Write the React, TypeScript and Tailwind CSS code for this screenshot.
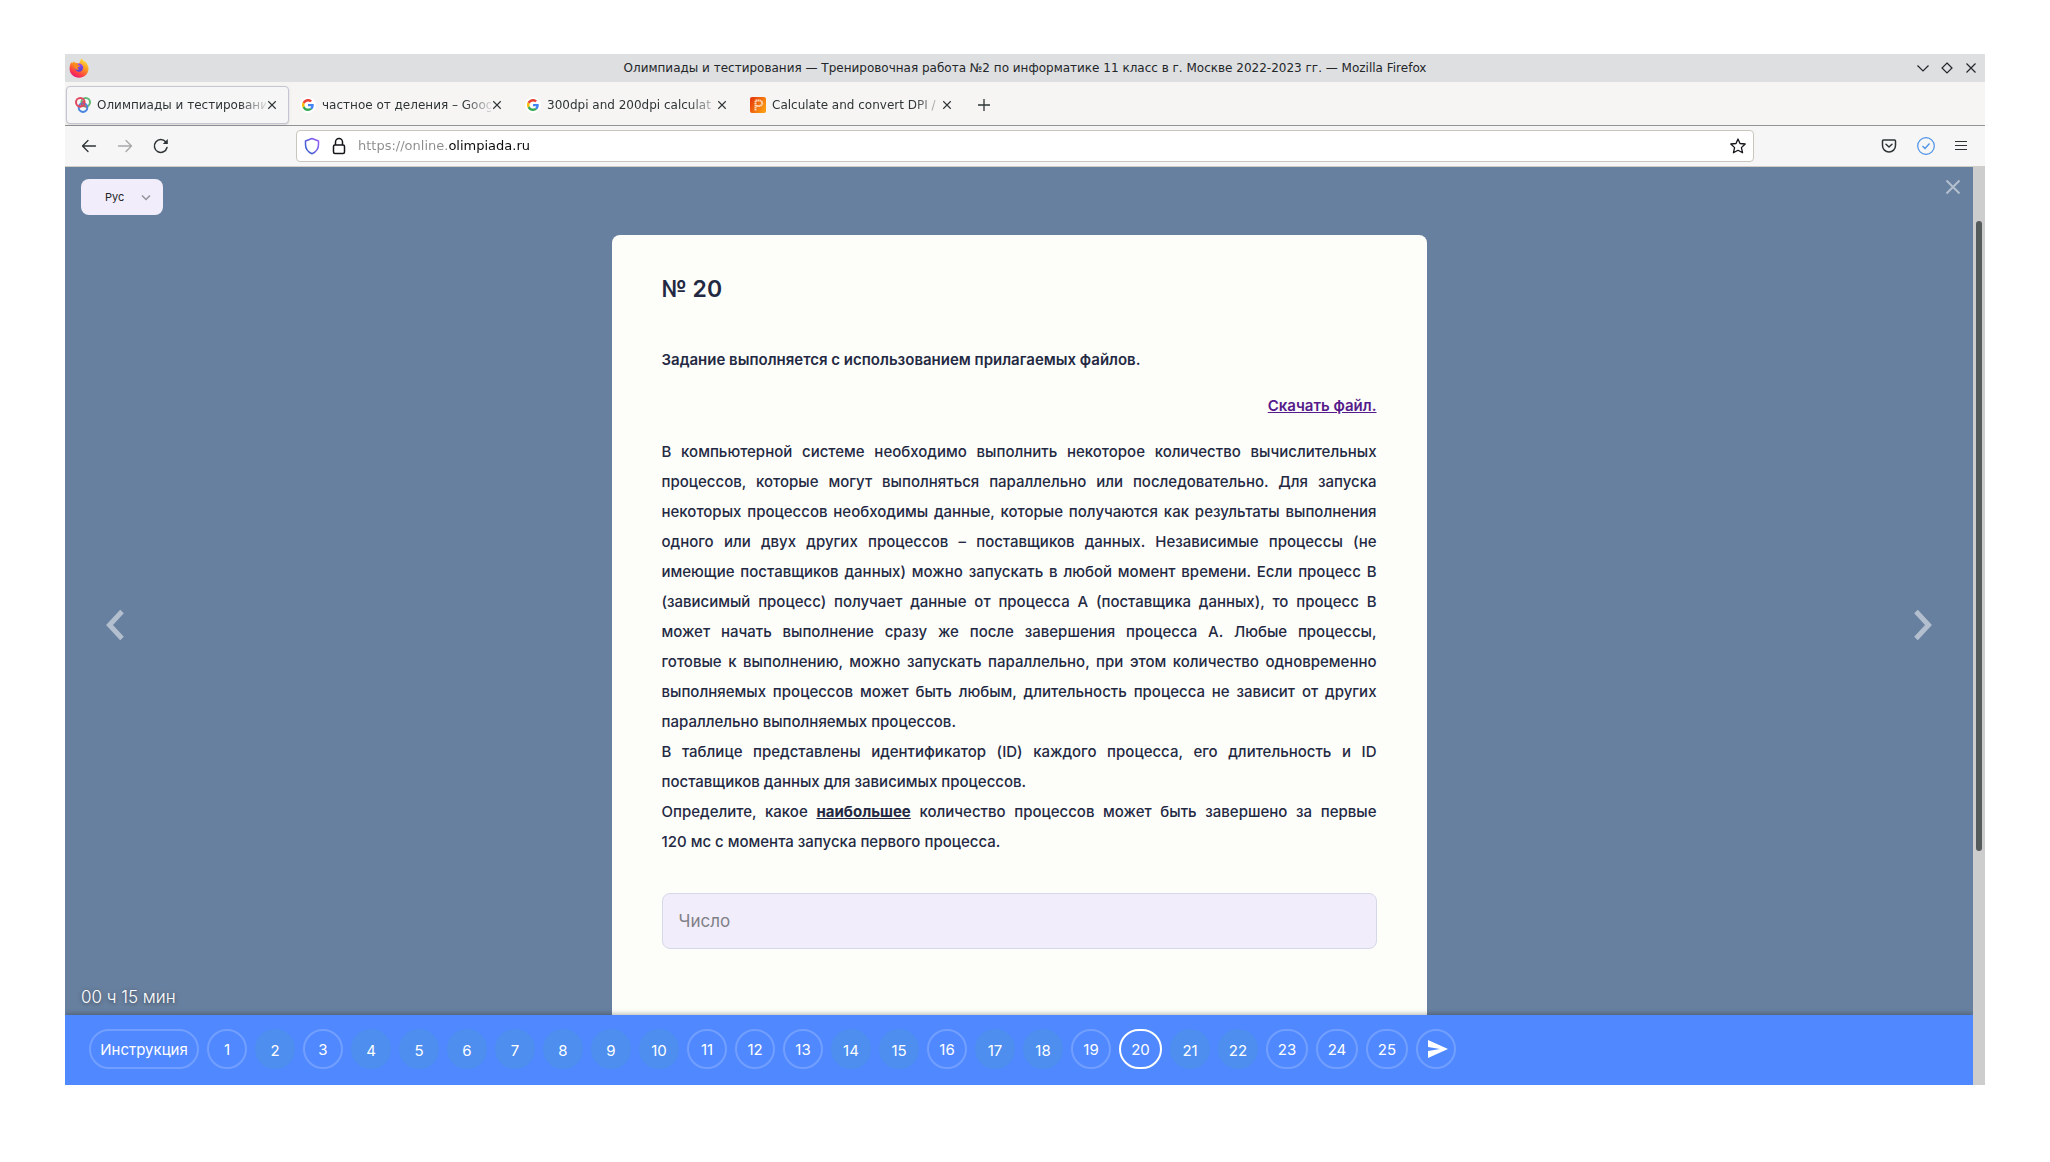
import React from "react";

type IconProps = { className?: string };

const Firefox = () => (
  <svg viewBox="0 0 20 20" className="h-5 w-5" aria-hidden="true">
    <defs>
      <linearGradient id="fx-fire" x1="0.8" y1="0" x2="0.25" y2="1">
        <stop offset="0" stopColor="#ffe84a" />
        <stop offset="0.4" stopColor="#ff9a1f" />
        <stop offset="0.75" stopColor="#ff3f45" />
        <stop offset="1" stopColor="#e5127d" />
      </linearGradient>
      <linearGradient id="fx-globe" x1="0.3" y1="0" x2="0.6" y2="1">
        <stop offset="0" stopColor="#a64ff0" />
        <stop offset="1" stopColor="#5a3fd0" />
      </linearGradient>
    </defs>
    <path d="M12.4.4c1.8 1.200 2.200 2.300 2.600 3.200.8-.1.900-.6.900-.6 2.400 2.500 3.700 5.200 3.600 8-.2 5-4.300 8.700-9.400 8.700C4.700 19.700.6 15.600.6 10.400c0-2.600.7-4.700 1.900-6.400l.5 1.200L5 3.200l.9 1.700c1.600-.2 3 .1 4 .7 1-1.400 1.200-3.500 2.500-5.200z" fill="url(#fx-fire)" />
    <circle cx="10" cy="9.600" r="4.200" fill="url(#fx-globe)" />
    <path d="M3.600 5.500c2.300-.7 4.600-.3 5.700 1.700.5.300 1.500.2 2 .4-.4 1.100-2.200 1.200-2.600 2.200-.1.800.4 1.500 1.500 1.900-1.700.5-3.600-.2-4.500-1.600z" fill="#ff8a1c" />
  </svg>
);

const Rings = () => (
  <svg viewBox="0 0 16 16" className="h-4 w-4" fill="none" strokeWidth="2" aria-hidden="true">
    <circle cx="10.700" cy="5.300" r="4.300" stroke="#5fb878" />
    <circle cx="8" cy="10.600" r="4.300" stroke="#4a86e0" />
    <circle cx="5.300" cy="5.300" r="4.300" stroke="#e0475f" />
    <path d="M5 10.800 8 3.800l3 7M6 8.800h4" stroke="#d8455f" strokeWidth="1" />
  </svg>
);

const Google = () => (
  <span className="flex h-4 w-4 items-center justify-center rounded-full bg-white">
    <svg viewBox="0 0 48 48" className="h-3 w-3" aria-hidden="true">
      <path fill="#EA4335" d="M24 9.500c3.540 0 6.710 1.220 9.210 3.600l6.850-6.850C35.900 2.380 30.470 0 24 0 14.620 0 6.510 5.380 2.560 13.220l7.980 6.190C12.430 13.720 17.740 9.500 24 9.500z" />
      <path fill="#4285F4" d="M46.980 24.550c0-1.570-.15-3.090-.38-4.550H24v9.020h12.940c-.58 2.960-2.260 5.480-4.780 7.180l7.730 6c4.510-4.180 7.090-10.360 7.090-17.650z" />
      <path fill="#FBBC05" d="M10.530 28.590c-.48-1.450-.76-2.990-.76-4.590s.27-3.140.76-4.590l-7.980-6.190C.92 16.460 0 20.120 0 24c0 3.880.92 7.540 2.560 10.780l7.970-6.190z" />
      <path fill="#34A853" d="M24 48c6.480 0 11.930-2.130 15.890-5.810l-7.730-6c-2.150 1.450-4.920 2.300-8.160 2.300-6.260 0-11.570-4.220-13.470-9.910l-7.980 6.190C6.510 42.620 14.620 48 24 48z" />
    </svg>
  </span>
);

const PixelP = () => (
  <svg viewBox="0 0 16 16" className="h-4 w-4" aria-hidden="true">
    <defs>
      <linearGradient id="pxl" x1="0" y1="0" x2="1" y2="0.600">
        <stop offset="0" stopColor="#e5310c" />
        <stop offset="1" stopColor="#fb9a10" />
      </linearGradient>
    </defs>
    <rect width="16" height="16" rx="2" fill="url(#pxl)" />
    <path d="M5.500 13.500v-10h4a2.500 2.500 0 0 1 0 5.500H6" fill="none" stroke="#ffd9b8" strokeWidth="2" strokeDasharray="1.600 0.400" />
  </svg>
);

const Cross = ({ className }: IconProps) => (
  <svg viewBox="0 0 16 16" className={className} fill="none" stroke="currentColor" strokeWidth="1.500" aria-hidden="true">
    <path d="m3 3 10 10M13 3 3 13" />
  </svg>
);

const Arrow = () => (
  <svg viewBox="0 0 16 16" className="h-4 w-4" fill="none" stroke="currentColor" strokeWidth="1.300" strokeLinecap="round" strokeLinejoin="round" aria-hidden="true">
    <path d="M14.500 8h-13M7 2.500 1.500 8 7 13.500" />
  </svg>
);

const Reload = () => (
  <svg viewBox="0 0 16 16" className="h-4 w-4" fill="none" stroke="currentColor" strokeWidth="1.500" strokeLinecap="round" aria-hidden="true">
    <path d="M14 9.500A6.400 6.400 0 1 1 12.800 4" />
    <path d="M14.800 1v5h-5z" fill="currentColor" stroke="none" />
  </svg>
);

const Shield = () => (
  <svg viewBox="0 0 16 18" className="h-[18px] w-4" fill="none" strokeWidth="1.500" strokeLinejoin="round" aria-hidden="true">
    <defs>
      <linearGradient id="shield" x1="1" y1="0" x2="0" y2="0.700">
        <stop offset="0" stopColor="#9a5cf5" />
        <stop offset="1" stopColor="#3a5fd0" />
      </linearGradient>
    </defs>
    <path d="M8 1.500 14.500 4v3.500c0 4-2.500 7.500-6.500 9.200-4-1.700-6.500-5.200-6.500-9.200V4z" stroke="url(#shield)" />
  </svg>
);

const Lock = () => (
  <svg viewBox="0 0 14 18" className="h-[18px] w-3.5" fill="none" stroke="#15141a" strokeWidth="1.500" aria-hidden="true">
    <rect x="1.500" y="8" width="11" height="8.500" rx="1.500" />
    <path d="M3.500 8V5a3.500 3.500 0 0 1 7 0v3" />
  </svg>
);

const Star = () => (
  <svg viewBox="0 0 16 16" className="h-4 w-4" fill="none" stroke="#15141a" strokeWidth="1.300" strokeLinejoin="round" aria-hidden="true">
    <path d="M8 1l2 4.500 5.200.5-3.800 3.600 1.200 5.200L8 12.300l-4.600 2.500 1.200-5.200L.8 6 6 5.500z" />
  </svg>
);

const Pocket = () => (
  <svg viewBox="0 0 16 16" className="h-4 w-4" fill="none" stroke="#2e3436" strokeWidth="1.500" strokeLinecap="round" strokeLinejoin="round" aria-hidden="true">
    <path d="M2.500 2h11a1 1 0 0 1 1 1v4.500a6.500 6.500 0 0 1-13 0V3a1 1 0 0 1 1-1z" />
    <path d="M5 6.200 8 9l3-2.800" />
  </svg>
);

const CheckCircle = () => (
  <svg viewBox="0 0 18 18" className="h-[18px] w-[18px]" fill="none" stroke="#4a90e8" aria-hidden="true">
    <circle cx="9" cy="9" r="8.300" strokeWidth="1.200" />
    <path d="m5.500 9 2.500 2.500 4.500-5" strokeWidth="1.300" />
  </svg>
);

const Menu = () => (
  <svg viewBox="0 0 12 12" className="h-3 w-3" fill="none" stroke="#2e3436" aria-hidden="true">
    <path d="M0 1.500h12M0 5.500h12M0 9.500h12" />
  </svg>
);

const Chevron = ({ className }: IconProps) => (
  <svg viewBox="0 0 20 32" className={className} fill="none" stroke="currentColor" strokeWidth="5" strokeLinejoin="miter" aria-hidden="true">
    <path d="M17 2.500 4.500 16 17 29.500" />
  </svg>
);

const Send = () => (
  <svg viewBox="0 0 20 18" className="h-[18px] w-5" fill="#fff" aria-hidden="true">
    <path d="M0 0l20 9L0 18v-7l12-2L0 7z" />
  </svg>
);

const tabs = [
  { icon: <Rings />, title: "Олимпиады и тестировани", active: true },
  { icon: <Google />, title: "частное от деления – Goog", active: false },
  { icon: <Google />, title: "300dpi and 200dpi calculat", active: false },
  { icon: <PixelP />, title: "Calculate and convert DPI /", active: false },
];

function TitleBar() {
  return (
    <header className="grid h-7 grid-cols-[100px_1fr_100px] items-center bg-[#dedfe1] px-1 text-[#232629]">
      <Firefox />
      <h1 className="truncate text-center text-[12px]">
        Олимпиады и тестирования — Тренировочная работа №2 по информатике 11 класс в г. Москве 2022-2023 гг. — Mozilla Firefox
      </h1>
      <div className="flex items-center justify-end gap-2 pr-0.5">
        <button aria-label="Свернуть" className="flex h-4 w-4 items-center justify-center">
          <svg viewBox="0 0 12 12" className="h-3 w-3" fill="none" stroke="currentColor" strokeWidth="1.200"><path d="m.5 3.500 5.500 5.500 5.500-5.500" /></svg>
        </button>
        <button aria-label="Развернуть" className="flex h-4 w-4 items-center justify-center">
          <svg viewBox="0 0 12 12" className="h-3 w-3" fill="none" stroke="currentColor" strokeWidth="1.200"><path d="M6 1l5 5-5 5-5-5z" /></svg>
        </button>
        <button aria-label="Закрыть окно" className="flex h-4 w-4 items-center justify-center">
          <svg viewBox="0 0 12 12" className="h-3 w-3" fill="none" stroke="currentColor" strokeWidth="1.200"><path d="m1.500 1.500 9 9M10.500 1.500l-9 9" /></svg>
        </button>
      </div>
    </header>
  );
}

function TabStrip() {
  return (
    <div className="flex h-11 items-center border-b border-[#929595] bg-[#f6f5f4] pt-0.5 pl-px">
      {tabs.map((t) => (
        <div
          key={t.title}
          className={
            t.active
              ? "mr-0.5 flex h-[38px] w-[223px] items-center gap-1.5 rounded border border-[#c4c4d2] bg-[#f6f6f6] pr-2.5 pl-2 text-[#2e3436] shadow-sm"
              : "mr-0.5 flex h-[38px] w-[223px] items-center gap-1.5 border border-transparent pr-2.5 pl-2 text-[#2e3436]"
          }
        >
          {t.icon}
          <button className="min-w-0 flex-1 text-left text-[12px] whitespace-nowrap [mask-image:linear-gradient(to_right,#000_84%,rgba(0,0,0,0.15))]">
            {t.title}
          </button>
          <button aria-label="Закрыть вкладку" className="-ml-1.5">
            <Cross className="h-3 w-3" />
          </button>
        </div>
      ))}
      <button aria-label="Новая вкладка" className="ml-3">
        <svg viewBox="0 0 12 12" className="h-3 w-3" stroke="#2e3436" strokeWidth="1.300"><path d="M6 0v12M0 6h12" /></svg>
      </button>
    </div>
  );
}

function Toolbar() {
  return (
    <div className="flex h-[41px] items-center border-b border-[#cfcdc4] bg-[#f6f6f6] pr-[18px] pl-4 text-[#2e3436]">
      <div className="flex w-[215px] items-center gap-5">
        <button aria-label="Назад"><Arrow /></button>
        <button aria-label="Вперёд" className="rotate-180 opacity-40"><Arrow /></button>
        <button aria-label="Обновить"><Reload /></button>
      </div>
      <div className="flex h-8 flex-1 items-center rounded border border-[#c9c7bd] bg-white px-[7px]">
        <Shield />
        <span className="ml-3"><Lock /></span>
        <input
          aria-label="Адрес"
          defaultValue="https://online.olimpiada.ru"
          className="ml-3 min-w-0 flex-1 bg-[linear-gradient(to_right,#8c8c8c_89px,#0c0c0d_89px)] bg-clip-text text-[13px] text-transparent outline-none"
        />
        <button aria-label="Добавить закладку"><Star /></button>
      </div>
      <div className="ml-[127px] flex items-center gap-5">
        <button aria-label="Pocket"><Pocket /></button>
        <button aria-label="Проверка"><CheckCircle /></button>
        <button aria-label="Меню"><Menu /></button>
      </div>
    </div>
  );
}

const Line = ({ children }: { children: React.ReactNode }) => (
  <span className="block [text-align-last:justify]">{children}</span>
);

function Task() {
  return (
    <article className="flex w-full max-w-[815px] flex-col self-stretch rounded-t-lg bg-[#fdfef9] px-[50px] pt-9 pb-16 text-[#242943]">
      <h2 className="text-[23px] leading-[36px] font-semibold">№ 20</h2>
      <p className="mt-[38px] text-[15px] leading-[30px] font-semibold">Задание выполняется с использованием прилагаемых файлов.</p>
      <p className="mt-4 text-right text-[15px] leading-[30px] font-semibold">
        <a href="#file" className="text-[#551a8b] underline">Скачать файл.</a>
      </p>
      <div className="mt-4 text-[15px] leading-[30px] font-medium">
        <p>
          <Line>В компьютерной системе необходимо выполнить некоторое количество вычислительных</Line>
          <Line>процессов, которые могут выполняться параллельно или последовательно. Для запуска</Line>
          <Line>некоторых процессов необходимы данные, которые получаются как результаты выполнения</Line>
          <Line>одного или двух других процессов – поставщиков данных. Независимые процессы (не</Line>
          <Line>имеющие поставщиков данных) можно запускать в любой момент времени. Если процесс B</Line>
          <Line>(зависимый процесс) получает данные от процесса A (поставщика данных), то процесс B</Line>
          <Line>может начать выполнение сразу же после завершения процесса A. Любые процессы,</Line>
          <Line>готовые к выполнению, можно запускать параллельно, при этом количество одновременно</Line>
          <Line>выполняемых процессов может быть любым, длительность процесса не зависит от других</Line>
          параллельно выполняемых процессов.
        </p>
        <p>
          <Line>В таблице представлены идентификатор (ID) каждого процесса, его длительность и ID</Line>
          поставщиков данных для зависимых процессов.
        </p>
        <p>
          <Line>Определите, какое <b className="font-bold underline">наибольшее</b> количество процессов может быть завершено за первые</Line>
          120 мс с момента запуска первого процесса.
        </p>
      </div>
      <input
        aria-label="Число"
        placeholder="Число"
        className="mt-9 h-14 w-full rounded-lg border border-[#d5d8e8] bg-[#f1edfa] px-4 text-[17px] outline-none placeholder:text-[#808086]"
      />
    </article>
  );
}

const outlined = new Set([1, 3, 11, 12, 13, 16, 19, 23, 24, 25]);
const numbers = Array.from({ length: 25 }, (_, i) => i + 1);

function circleClass(n: number) {
  if (n === 20) return "h-10 w-[43px] rounded-full border-2 border-white pt-0.5";
  if (n > 22) return "h-10 w-[42px] rounded-full border-2 border-white/20 pt-0.5";
  if (outlined.has(n)) return "h-10 w-10 rounded-full border-2 border-white/20 pt-0.5";
  return "h-10 w-10 rounded-full bg-[#4d8eee] pt-1";
}

export default function App() {
  return (
    <div className="flex min-h-screen flex-col bg-white px-[65px] pt-[54px] pb-[77px] font-['DejaVu_Sans',sans-serif]">
      <TitleBar />
      <TabStrip />
      <Toolbar />
      <div className="flex flex-1 font-['Inter',sans-serif]">
        <div className="flex min-w-0 flex-1 flex-col overflow-hidden">
          <main className="relative flex flex-1 flex-col bg-[#68809f]">
            <div className="flex h-[68px] items-start justify-between pt-3 pr-3 pl-4">
              <label className="relative text-[#242424]">
                <select aria-label="Язык" className="h-9 w-[82px] appearance-none rounded-lg bg-[#f1edfa] pl-6 text-[11px]">
                  <option>Рус</option>
                  <option>Eng</option>
                </select>
                <svg viewBox="0 0 10 6" className="pointer-events-none absolute top-4 right-3 h-1.5 w-2.5" fill="none" stroke="#96939c" strokeWidth="1.500"><path d="m1 .5 4 4 4-4" /></svg>
              </label>
              <button aria-label="Закрыть" className="text-[#b3bfce]">
                <svg viewBox="0 0 16 16" className="h-4 w-4" fill="none" stroke="currentColor" strokeWidth="2"><path d="m1.500 1.500 13 13M14.500 1.500l-13 13" /></svg>
              </button>
            </div>
            <div className="flex flex-1 items-center justify-between gap-8 px-10">
              <button aria-label="Предыдущее задание" className="text-[#b3bfce]"><Chevron className="h-8 w-5" /></button>
              <Task />
              <button aria-label="Следующее задание" className="rotate-180 text-[#b3bfce]"><Chevron className="h-8 w-5" /></button>
            </div>
            <p className="absolute bottom-1.5 left-4 text-[17px] leading-6 font-light text-white [text-shadow:0_1px_4px_rgba(0,0,0,0.5)]">00 ч 15 мин</p>
          </main>
          <nav className="z-10 flex h-[70px] items-start gap-2 bg-[#4f88ff] px-6 pt-3.5 text-[15px] text-white shadow-[0_-1px_5px_rgba(0,0,0,0.3)]">
            <button className="h-10 w-[110px] rounded-full border-2 border-white/20 pt-0.5">Инструкция</button>
            {numbers.map((n) => (
              <button key={n} className={circleClass(n)}>{n}</button>
            ))}
            <button aria-label="Отправить" className="flex h-10 w-10 items-center justify-center rounded-full border-2 border-white/20 pl-1"><Send /></button>
          </nav>
        </div>
        <div className="flex w-3 flex-col items-center bg-[#cdcdcd] pt-[54px]">
          <div className="h-[630px] w-1.5 rounded-full bg-[#555a5a]" />
        </div>
      </div>
    </div>
  );
}
